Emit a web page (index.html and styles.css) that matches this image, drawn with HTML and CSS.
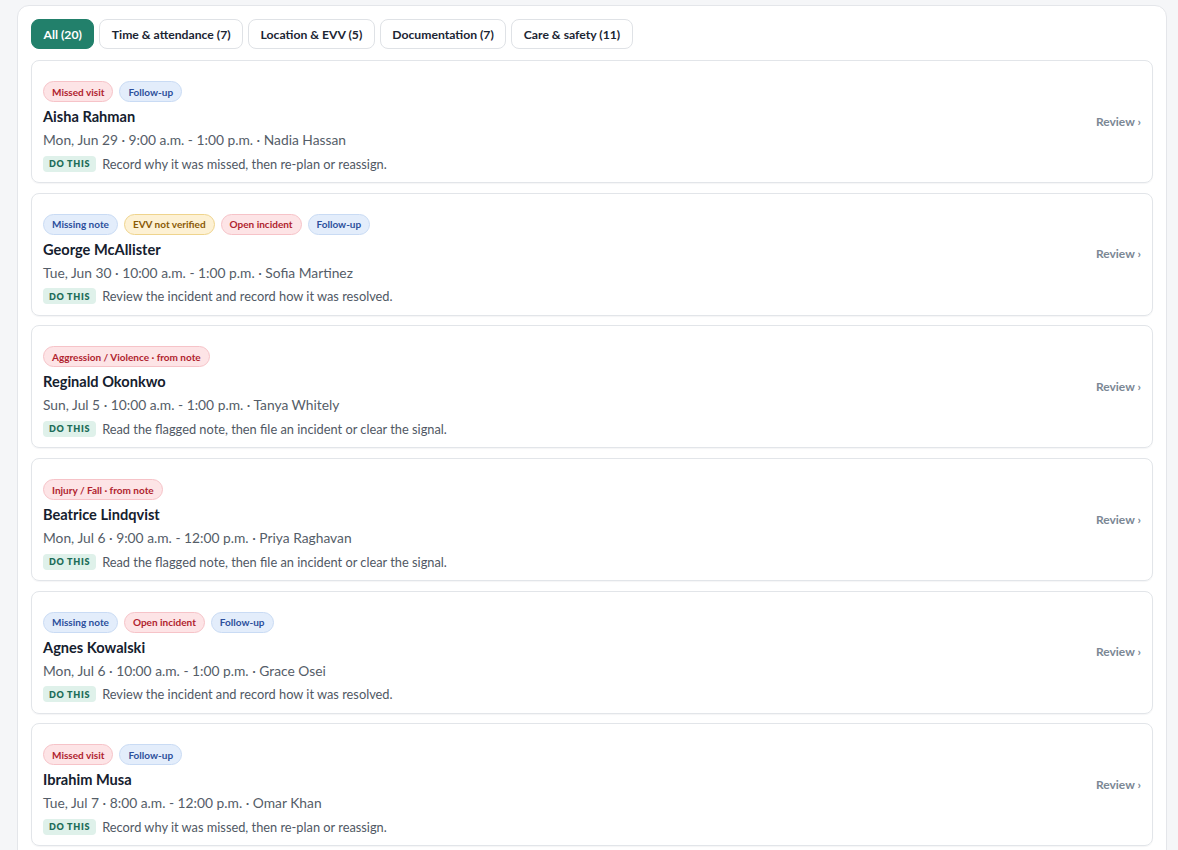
FILE: index.html
```html
<!DOCTYPE html>
<html lang="en">
<head>
<meta charset="utf-8">
<title>Visits needing attention</title>
<link rel="stylesheet" href="styles.css">
</head>
<body>
<div class="page">
  <section class="panel">
    <nav class="tabs">
      <button class="tab active">All (20)</button>
      <button class="tab">Time &amp; attendance (7)</button>
      <button class="tab">Location &amp; EVV (5)</button>
      <button class="tab">Documentation (7)</button>
      <button class="tab">Care &amp; safety (11)</button>
    </nav>
    <div class="list">
      <article class="card">
        <div class="body">
          <div class="tags"><span class="tag red">Missed visit</span><span class="tag blue">Follow-up</span></div>
          <div class="name">Aisha Rahman</div>
          <div class="meta">Mon, Jun 29 · 9:00 a.m. - 1:00 p.m. · Nadia Hassan</div>
          <div class="todo"><span class="do">DO THIS</span><span class="action">Record why it was missed, then re-plan or reassign.</span></div>
        </div>
        <a class="review">Review ›</a>
      </article>
      <article class="card">
        <div class="body">
          <div class="tags"><span class="tag blue">Missing note</span><span class="tag amber">EVV not verified</span><span class="tag red">Open incident</span><span class="tag blue">Follow-up</span></div>
          <div class="name">George McAllister</div>
          <div class="meta">Tue, Jun 30 · 10:00 a.m. - 1:00 p.m. · Sofia Martinez</div>
          <div class="todo"><span class="do">DO THIS</span><span class="action">Review the incident and record how it was resolved.</span></div>
        </div>
        <a class="review">Review ›</a>
      </article>
      <article class="card">
        <div class="body">
          <div class="tags"><span class="tag red">Aggression / Violence · from note</span></div>
          <div class="name">Reginald Okonkwo</div>
          <div class="meta">Sun, Jul 5 · 10:00 a.m. - 1:00 p.m. · Tanya Whitely</div>
          <div class="todo"><span class="do">DO THIS</span><span class="action">Read the flagged note, then file an incident or clear the signal.</span></div>
        </div>
        <a class="review">Review ›</a>
      </article>
      <article class="card">
        <div class="body">
          <div class="tags"><span class="tag red">Injury / Fall · from note</span></div>
          <div class="name">Beatrice Lindqvist</div>
          <div class="meta">Mon, Jul 6 · 9:00 a.m. - 12:00 p.m. · Priya Raghavan</div>
          <div class="todo"><span class="do">DO THIS</span><span class="action">Read the flagged note, then file an incident or clear the signal.</span></div>
        </div>
        <a class="review">Review ›</a>
      </article>
      <article class="card">
        <div class="body">
          <div class="tags"><span class="tag blue">Missing note</span><span class="tag red">Open incident</span><span class="tag blue">Follow-up</span></div>
          <div class="name">Agnes Kowalski</div>
          <div class="meta">Mon, Jul 6 · 10:00 a.m. - 1:00 p.m. · Grace Osei</div>
          <div class="todo"><span class="do">DO THIS</span><span class="action">Review the incident and record how it was resolved.</span></div>
        </div>
        <a class="review">Review ›</a>
      </article>
      <article class="card">
        <div class="body">
          <div class="tags"><span class="tag red">Missed visit</span><span class="tag blue">Follow-up</span></div>
          <div class="name">Ibrahim Musa</div>
          <div class="meta">Tue, Jul 7 · 8:00 a.m. - 12:00 p.m. · Omar Khan</div>
          <div class="todo"><span class="do">DO THIS</span><span class="action">Record why it was missed, then re-plan or reassign.</span></div>
        </div>
        <a class="review">Review ›</a>
      </article>
    </div>
  </section>
</div>
</body>
</html>
```

FILE: styles.css
```css
* { box-sizing: border-box; }
html, body { margin: 0; background: #f5f6f8; }
body {
  font-family: "Lato", "Inter", "Liberation Sans", sans-serif;
  color: #1b2533;
}
.page { padding: 5px 11px 0 17px; height: 850px; overflow: hidden; }
.panel {
  background: #fff;
  border: 1px solid #e4e6ea;
  border-radius: 12px;
  padding: 13px 13px 20px 13px;
  min-height: 900px;
}
.tabs { display: flex; gap: 5px; margin-bottom: 11px; }
.tab {
  font-family: inherit;
  height: 30px;
  padding: 0 11.5px;
  font-size: 12.2px;
  font-weight: 700;
  color: #1b2533;
  background: #fff;
  border: 1px solid #dfe2e6;
  border-radius: 8px;
}
.tab.active { background: #22806b; border-color: #22806b; color: #fff; }
.list { display: flex; flex-direction: column; gap: 9.7px; }
.card {
  display: flex;
  align-items: center;
  border: 1px solid #e2e5e9;
  border-radius: 8px;
  padding: 20px 11px 11px 11px;
  height: 123px;
  box-shadow: 0 1px 1px rgba(16, 24, 40, 0.04);
}
.body { flex: 1; align-self: flex-start; }
.tags { display: flex; gap: 6px; height: 21px; margin-bottom: 6px; }
.tag {
  display: inline-flex;
  align-items: center;
  height: 21px;
  padding: 0 8px;
  border-radius: 11px;
  font-size: 10px;
  font-weight: 700;
  border: 1px solid;
}
.tag.red { background: #fde4e6; border-color: #f6c3c8; color: #b0232e; }
.tag.blue { background: #e3edfb; border-color: #c9dbf4; color: #2c4f9c; }
.tag.amber { background: #fdf1d4; border-color: #efd48d; color: #8a5a06; }
.name { font-size: 14.6px; font-weight: 700; line-height: 18px; color: #15202e; }
.meta { font-size: 13.8px; line-height: 20px; margin-top: 4px; color: #555d68; }
.todo { display: flex; align-items: center; gap: 6px; margin-top: 5px; height: 17px; }
.do {
  display: inline-flex;
  align-items: center;
  height: 16px;
  padding: 0 6px;
  border-radius: 4px;
  background: #dff1ea;
  color: #1d6d59;
  font-size: 9px;
  font-weight: 800;
  letter-spacing: 0.7px;
}
.action { font-size: 12.8px; color: #505864; }
.review { font-size: 12px; font-weight: 700; color: #7b8794; white-space: nowrap; margin-bottom: 10px; }
```
